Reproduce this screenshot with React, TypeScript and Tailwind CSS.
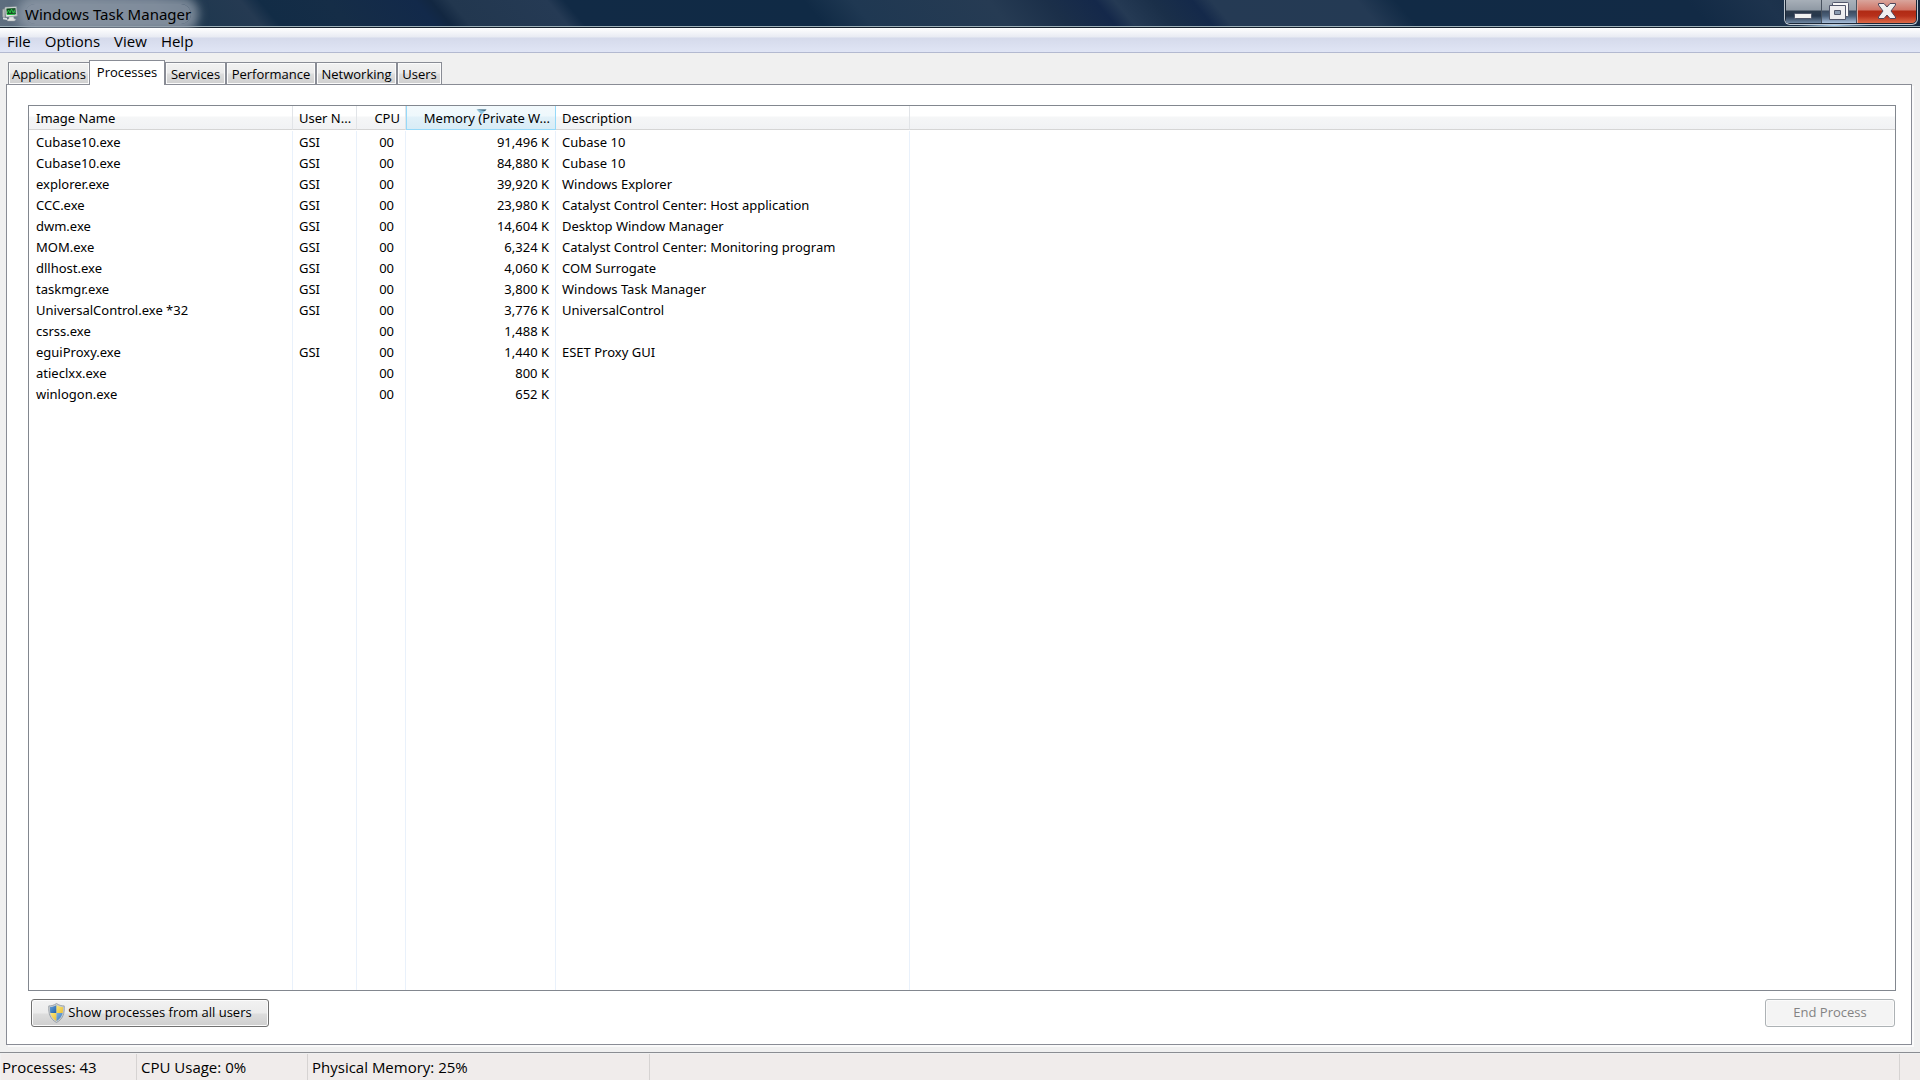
import { useState, type ReactNode } from 'react';

type Process = { name: string; user?: string; cpu: string; memory: string; description?: string };

const processes: Process[] = [
  { name: 'Cubase10.exe', user: 'GSI', cpu: '00', memory: '91,496 K', description: 'Cubase 10' },
  { name: 'Cubase10.exe', user: 'GSI', cpu: '00', memory: '84,880 K', description: 'Cubase 10' },
  { name: 'explorer.exe', user: 'GSI', cpu: '00', memory: '39,920 K', description: 'Windows Explorer' },
  { name: 'CCC.exe', user: 'GSI', cpu: '00', memory: '23,980 K', description: 'Catalyst Control Center: Host application' },
  { name: 'dwm.exe', user: 'GSI', cpu: '00', memory: '14,604 K', description: 'Desktop Window Manager' },
  { name: 'MOM.exe', user: 'GSI', cpu: '00', memory: '6,324 K', description: 'Catalyst Control Center: Monitoring program' },
  { name: 'dllhost.exe', user: 'GSI', cpu: '00', memory: '4,060 K', description: 'COM Surrogate' },
  { name: 'taskmgr.exe', user: 'GSI', cpu: '00', memory: '3,800 K', description: 'Windows Task Manager' },
  { name: 'UniversalControl.exe *32', user: 'GSI', cpu: '00', memory: '3,776 K', description: 'UniversalControl' },
  { name: 'csrss.exe', cpu: '00', memory: '1,488 K' },
  { name: 'eguiProxy.exe', user: 'GSI', cpu: '00', memory: '1,440 K', description: 'ESET Proxy GUI' },
  { name: 'atieclxx.exe', cpu: '00', memory: '800 K' },
  { name: 'winlogon.exe', cpu: '00', memory: '652 K' },
];

const tabs = [
  { label: 'Applications', width: 'w-[82px]' },
  { label: 'Processes', width: 'w-[76px]' },
  { label: 'Services', width: 'w-[61px]' },
  { label: 'Performance', width: 'w-[90px]' },
  { label: 'Networking', width: 'w-[81px]' },
  { label: 'Users', width: 'w-[45px]' },
];

function AppIcon() {
  return (
    <svg className="size-4" viewBox="0 0 16 16" aria-hidden="true">
      <path d="M0.5 3.5 3 2.5v9l-2.500-.5z" fill="#b4babb" stroke="#7c8486" strokeWidth=".6" />
      <path d="M3 1.300 14.500.8l.8 9.200L4 11z" fill="#e6e9e8" stroke="#9aa1a3" strokeWidth=".6" />
      <path d="M4.300 2.400 13.500 2l.6 6.300-9.200.7z" fill="#0a4a18" />
      <path d="M5 7.500 6.500 4l1.500 3 1.500-3.800L11.300 7l1-2.500 1 2.500M5 8.500h8" fill="none" stroke="#22c53e" strokeWidth="1" />
      <path d="m7 11 4.500-.4.500 2 2 .8-1.500 1.600H5.500l-.5-1.400 2-.8z" fill="#e6e9e8" stroke="#9aa1a3" strokeWidth=".5" />
      <path d="M1 11.500 5 12v2l-4-.8z" fill="#d8dcdc" />
    </svg>
  );
}

function ShieldIcon() {
  return (
    <svg className="h-5 w-[17px] shrink-0" viewBox="0 0 17 20" aria-hidden="true">
      <defs>
        <linearGradient id="shieldBlue" x1="0" y1="0" x2="1" y2="1">
          <stop offset="0" stopColor="#7fb4e4" />
          <stop offset="1" stopColor="#1d5fa8" />
        </linearGradient>
        <linearGradient id="shieldGold" x1="0" y1="0" x2="1" y2="1">
          <stop offset="0" stopColor="#fdf08a" />
          <stop offset="1" stopColor="#e8b92c" />
        </linearGradient>
        <clipPath id="shieldClip">
          <path d="M8.500 2C6.500 3.400 4.300 4 2 4c-.4 6.500 1.400 11 6.500 14C13.600 15 15.400 10.500 15 4c-2.300 0-4.500-.6-6.500-2z" />
        </clipPath>
      </defs>
      <path d="M8.500.5C6 2.200 3.500 3 .8 2.900.2 10.500 2.200 16.200 8.500 19.500c6.300-3.300 8.300-9 7.700-16.600C13.500 3 11 2.200 8.500.5z" fill="#c9ced3" stroke="#8f979e" strokeWidth=".8" />
      <g clipPath="url(#shieldClip)">
        <rect width="8.500" height="10" fill="url(#shieldBlue)" />
        <rect x="8.500" width="8.500" height="10" fill="url(#shieldGold)" />
        <rect y="10" width="8.500" height="10" fill="url(#shieldGold)" />
        <rect x="8.500" y="10" width="8.500" height="10" fill="url(#shieldBlue)" />
      </g>
    </svg>
  );
}

function MinimizeIcon() {
  return (
    <svg className="h-[22px] w-5" viewBox="0 0 20 22" aria-hidden="true">
      <rect x="1.500" y="13.500" width="17" height="5" rx=".8" fill="#f1f1f1" stroke="#50566a" />
    </svg>
  );
}

function RestoreIcon() {
  return (
    <svg className="h-[22px] w-5" viewBox="0 0 20 22" aria-hidden="true">
      <rect x="3.500" y="2.500" width="16" height="14" rx=".8" fill="#f7f7f7" stroke="#50566a" />
      <path d="M.5 5.500h16v14H.5zM5.500 10.500v4h6v-4z" fill="#ededef" fillRule="evenodd" stroke="#50566a" strokeLinejoin="round" />
      <rect x="6" y="11" width="5" height="3" fill="#8a9bb0" />
    </svg>
  );
}

function CloseIcon() {
  return (
    <svg className="h-[22px] w-5" viewBox="0 0 20 22" aria-hidden="true">
      <path
        d="M1.500 3.500h5.500l3 3.500 3-3.500h5.500v1.500l-4.500 6 4.500 6v1.500h-5.500l-3-3.500-3 3.500h-5.500V17l4.500-6-4.500-6z"
        fill="#f0f0f0"
        stroke="#50465a"
        strokeLinejoin="round"
      />
    </svg>
  );
}

const glass =
  'bg-[linear-gradient(180deg,#a7afb8_0px,#8f99a4_10px,#2c3a4c_11px,#26374c_16px,#7088a4_23px)]';
const glassLit =
  'bg-[linear-gradient(180deg,#aab2bb_0px,#96a0ab_10px,#3a4a5f_11px,#4c617b_16px,#a9c0dc_23px)]';

function WindowControls() {
  return (
    <div className="flex h-[25px] w-[134px] overflow-hidden rounded-b-md border border-t-0 border-[#c0c9d2] bg-[#1b2838] px-px pb-px">
      <button aria-label="Minimize" className={`flex w-9 justify-start border-r border-[#48525f] pl-[7px] ${glass}`}>
        <MinimizeIcon />
      </button>
      <button aria-label="Restore" className={`flex w-[35px] justify-start border-r border-[#48525f] pl-[7px] ${glassLit}`}>
        <RestoreIcon />
      </button>
      <button
        aria-label="Close"
        className="flex flex-1 justify-center rounded-br border-l border-[#e0a79c] bg-[linear-gradient(180deg,#d9a59c_0px,#cf7466_10px,#b02a14_11px,#b8301a_16px,#dd6a48_23px)]"
      >
        <CloseIcon />
      </button>
    </div>
  );
}

function TitleBar() {
  return (
    <header className="border-b border-[#15202c] bg-[linear-gradient(50deg,#5f6f80_0%,#566779_5%,#40536a_9%,#1f384f_10.5%,#253a52_13.5%,#122c46_14.5%,#152d47_18%,#12294a_22.5%,#122741_23.3%,#22374f_24.3%,#253a54_29.3%,#112a45_30.2%,#102a45_42.500%,#1f3852_45%,#263b53_52%,#1b2f49_55%,#14284a_57.500%,#253a54_58.500%,#1a2f49_60.500%,#14294a_62.500%,#253a54_63.500%,#243a54_71%,#112a45_73%,#122a45_88%,#1d334d_92%,#14283f_100%)]">
      <div className="flex h-[27px] items-start justify-between border-b border-[#9db0b8] bg-[radial-gradient(ellipse_36px_10px_at_calc(100%-86px)_100%,#a9cdf0,transparent)] pr-0.5">
        <div className="flex h-[27px] items-center gap-[7px] pl-0.5">
          <AppIcon />
          <h1 className="rounded-full bg-[#8e9aa7]/80 text-[15px] leading-5 text-black shadow-[0_0_10px_8px_rgba(142,154,167,0.8)]">
            Windows Task Manager
          </h1>
        </div>
        <WindowControls />
      </div>
    </header>
  );
}

function MenuBar() {
  return (
    <nav className="flex h-[25px] items-center gap-3.5 border-b border-[#b3b9d0] bg-[linear-gradient(180deg,#ffffff_0px,#e8ebf3_9px,#d5daeb_10px,#e0e5f5_24px)] pt-px pl-[7px] font-['Open_Sans',sans-serif] text-[15px]">
      {['File', 'Options', 'View', 'Help'].map((item) => (
        <button key={item} className="leading-6">
          {item}
        </button>
      ))}
    </nav>
  );
}

function HeaderCell({ children, className }: { children?: ReactNode; className: string }) {
  return (
    <th
      scope="col"
      className={`h-6 border-b border-[#d5d5d5] bg-[linear-gradient(180deg,#ffffff_0px,#ffffff_10px,#f5f6f7_11px,#f1f2f4_23px)] p-0 font-normal ${className}`}
    >
      {children}
    </th>
  );
}

const headerDivider = 'border-r border-r-[#e1e4e8]';
const line = 'border-r border-[#e9f1fb]';

function ProcessTable() {
  return (
    <div className="grid flex-1 border border-[#82878f] bg-white">
      <table className="h-full w-full table-fixed border-separate border-spacing-0 text-[13px] leading-5">
        <colgroup>
          <col className="w-[264px]" />
          <col className="w-16" />
          <col className="w-[49px]" />
          <col className="w-[150px]" />
          <col className="w-[354px]" />
          <col />
        </colgroup>
        <thead>
          <tr>
            <HeaderCell className={headerDivider}>
              <button className="w-full pt-[3px] pl-[7px] text-left leading-4">Image Name</button>
            </HeaderCell>
            <HeaderCell className={headerDivider}>
              <button className="w-full pt-[3px] pl-1.5 text-left leading-4">User N...</button>
            </HeaderCell>
            <HeaderCell className={headerDivider}>
              <button className="w-full pt-[3px] pr-[5px] text-right leading-4">CPU</button>
            </HeaderCell>
            <th
              scope="col"
              aria-sort="descending"
              className="relative h-6 border border-t-0 border-[#96d9f9] bg-[linear-gradient(180deg,#f2f9fc_0px,#eef8fc_10px,#e1f1f9_11px,#d8ecf6_23px)] p-0 font-normal"
            >
              <button className="w-full pt-[3px] pr-[5px] text-right leading-4">Memory (Private W...</button>
              <svg className="absolute top-[3px] left-[69px] h-1.5 w-[11px]" viewBox="0 0 11 6" aria-hidden="true">
                <path d="M.5.500h10L5.500 5.500z" fill="#8cc3de" />
                <path d="M.5.500h10L9 2z" fill="#3c5e72" />
              </svg>
            </th>
            <HeaderCell className={headerDivider}>
              <button className="w-full pt-[3px] pl-1.5 text-left leading-4">Description</button>
            </HeaderCell>
            <HeaderCell className="" />
          </tr>
        </thead>
        <tbody>
          <tr className="h-px">
            <td colSpan={6} className="p-0" />
          </tr>
          {processes.map((p, i) => (
            <tr key={i} className="h-[21px]">
              <td className={`p-0 pl-[7px] ${line}`}>{p.name}</td>
              <td className={`p-0 pl-1.5 ${line}`}>{p.user}</td>
              <td className={`p-0 pr-[11px] text-right ${line}`}>{p.cpu}</td>
              <td className={`p-0 pr-1.5 text-right ${line}`}>{p.memory}</td>
              <td className={`p-0 pl-1.5 ${line}`}>{p.description}</td>
              <td className="p-0" />
            </tr>
          ))}
          <tr>
            <td className={line} />
            <td className={line} />
            <td className={line} />
            <td className={line} />
            <td className={line} />
            <td />
          </tr>
        </tbody>
      </table>
    </div>
  );
}

function StatusBar() {
  return (
    <footer className="border-t border-[#8b8d92] pt-px pl-px font-['Open_Sans',sans-serif]">
      <div className="flex h-[26px] bg-[#f0eceb] text-[15px] leading-[26px]">
        <span className="w-[136px] border-r border-[#d6d3d2] pl-px">Processes: 43</span>
        <span className="w-[171px] border-r border-[#d6d3d2] pl-1">CPU Usage: 0%</span>
        <span className="w-[342px] border-r border-[#d6d3d2] pl-1">Physical Memory: 25%</span>
        <span className="mr-5 flex-1 border-r border-[#d6d3d2]" />
      </div>
    </footer>
  );
}

export default function App() {
  const [active, setActive] = useState('Processes');

  return (
    <div className="flex min-h-screen flex-col bg-[#f0f0f0] font-['Noto_Sans',sans-serif] text-black">
      <TitleBar />
      <MenuBar />
      <main className="flex flex-1 flex-col pt-[7px] pr-2 pb-[7px] pl-1.5">
        <div role="tablist" className="flex items-end pl-0.5 font-['Open_Sans',sans-serif] text-[13px]">
          {tabs.map(({ label, width }) =>
            label === active ? (
              <button
                key={label}
                role="tab"
                aria-selected="true"
                className={`relative -mb-px -ml-px h-[25px] border border-b-0 border-[#898c95] bg-white pb-0.5 leading-5 ${width}`}
              >
                {label}
              </button>
            ) : (
              <button
                key={label}
                role="tab"
                aria-selected="false"
                onClick={() => setActive(label)}
                className={`h-[22px] border border-b-0 border-[#898c95] bg-[linear-gradient(180deg,#f2f2f2_0px,#ebebeb_10px,#dddddd_11px,#cfcfcf_21px)] leading-5 shadow-[inset_0_0_0_1px_#fbfbfb] ${width}`}
              >
                {label}
              </button>
            ),
          )}
        </div>
        <section className="flex flex-1 flex-col gap-2 border border-[#898c95] bg-white pt-5 pr-[15px] pb-[17px] pl-[21px] shadow-[2px_2px_0_#fafafa]">
          <ProcessTable />
          <div className="flex justify-between pr-px pl-[3px] font-['Open_Sans',sans-serif] text-[13px]">
            <button className="flex h-7 w-[238px] items-center justify-center gap-[3px] rounded-[3px] border border-[#707070] bg-[linear-gradient(180deg,#f2f2f2_0px,#ebebeb_13px,#dddddd_14px,#cfcfcf_26px)] shadow-[inset_0_0_0_1px_#fbfbfb]">
              <ShieldIcon />
              Show processes from all users
            </button>
            <button disabled className="h-7 w-[130px] rounded-[3px] border border-[#adb2b5] bg-[#f4f4f4] text-[#838383] shadow-[inset_0_0_0_1px_#fbfbfb]">
              End Process
            </button>
          </div>
        </section>
      </main>
      <StatusBar />
    </div>
  );
}
